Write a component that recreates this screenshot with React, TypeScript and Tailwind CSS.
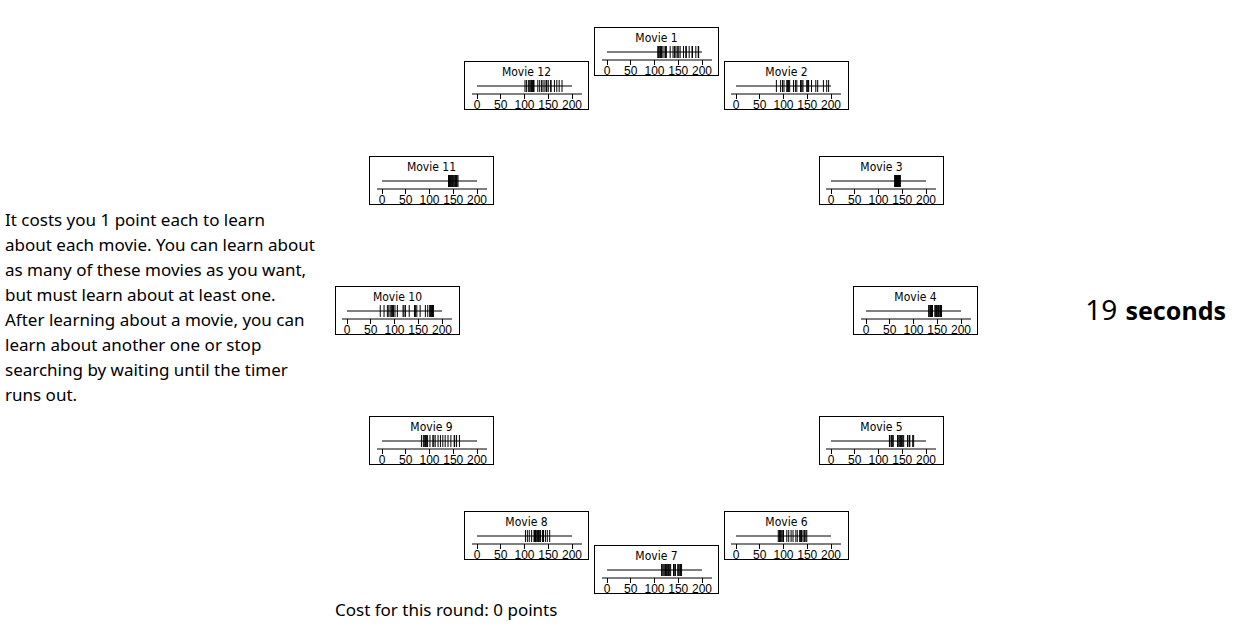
const AXIS_LABELS = [0, 50, 100, 150, 200];
const PLOT_WIDTH = 95;
const RING_RADIUS = 259;

// Distance from the ring's centre for each of the twelve clock positions, starting at the top.
const RING_OFFSETS = [
  [0, -259],
  [130, -225],
  [225, -130],
  [259, 0],
  [225, 130],
  [130, 225],
  [0, 259],
  [-130, 225],
  [-225, 130],
  [-259, 0],
  [-225, -130],
  [-130, -225],
];

type Movie = { id: number; origin: number; scores: number[] };

const movies: Movie[] = [
  { id: 1, origin: 13, scores: [107, 108, 110, 112, 113, 115, 116, 120, 123, 125, 133, 139, 142, 145, 148, 151, 154, 161, 166, 167, 173, 179, 180, 187, 192, 193] },
  { id: 2, origin: 12, scores: [85, 94, 98, 101, 107, 108, 110, 111, 113, 121, 125, 128, 136, 137, 139, 141, 149, 150, 152, 153, 159, 168, 172, 184, 191, 195] },
  { id: 3, origin: 12, scores: [134, 135, 136, 137, 138, 139, 140, 141, 142, 143, 144, 145, 146] },
  { id: 4, origin: 13, scores: [132, 133, 135, 136, 138, 139, 140, 145, 146, 148, 149, 150, 152, 153, 154, 156, 157, 159] },
  { id: 5, origin: 12, scores: [123, 124, 127, 128, 130, 131, 140, 141, 143, 145, 146, 148, 149, 151, 153, 161, 162, 165, 166, 172, 174] },
  { id: 6, origin: 12, scores: [89, 91, 92, 94, 95, 97, 99, 100, 107, 111, 116, 120, 126, 129, 134, 136, 138, 139, 143, 144, 147, 149] },
  { id: 7, origin: 13, scores: [115, 116, 118, 120, 122, 123, 125, 127, 129, 130, 132, 134, 140, 141, 143, 144, 149, 150, 152, 154, 155, 157] },
  { id: 8, origin: 13, scores: [102, 106, 110, 115, 120, 121, 123, 124, 126, 127, 129, 130, 131, 133, 134, 138, 140, 144, 148, 153] },
  { id: 9, origin: 13, scores: [83, 87, 89, 91, 92, 94, 96, 101, 107, 109, 112, 118, 123, 128, 133, 139, 145, 152, 153, 157, 163] },
  { id: 10, origin: 12, scores: [70, 78, 85, 88, 91, 94, 96, 98, 101, 106, 118, 120, 123, 131, 142, 144, 147, 154, 165, 170, 174, 176, 178, 180, 182] },
  { id: 11, origin: 13, scores: [140, 141, 142, 144, 145, 146, 148, 149, 151, 152, 154, 155, 157, 158, 160] },
  { id: 12, origin: 13, scores: [101, 104, 108, 110, 112, 114, 115, 117, 119, 120, 128, 132, 136, 139, 143, 146, 147, 150, 155, 156, 163, 168, 173, 179] },
];

function ScoreStrip({ origin, scores }: { origin: number; scores: number[] }) {
  const toX = (value: number) => origin + (value * PLOT_WIDTH) / 200;
  return (
    <svg viewBox="0 0 123 29" className="block h-[29px] w-full" aria-hidden="true">
      <g transform="translate(-1 -19)">
        <path d={`M${origin} 25H${origin + PLOT_WIDTH}`} stroke="black" />
        <path d={`M${origin - 5} 33H${origin + PLOT_WIDTH + 10}`} stroke="black" />
        {scores.map((score) => (
          <path key={score} d={`M${toX(score)} 19V31`} stroke="black" />
        ))}
        {AXIS_LABELS.map((label) => (
          <g key={label}>
            <path d={`M${Math.floor(toX(label)) + 0.5} 33V38`} stroke="black" />
            <text
              x={toX(label)}
              y="48"
              textAnchor="middle"
              className="fill-black font-['Liberation_Sans',Arial,sans-serif] text-[12px]"
            >
              {label}
            </text>
          </g>
        ))}
      </g>
    </svg>
  );
}

function MovieCard({ movie, index }: { movie: Movie; index: number }) {
  const [x, y] = RING_OFFSETS[index];
  return (
    <button
      type="button"
      className="absolute h-[49px] w-[125px] cursor-pointer overflow-hidden border border-black bg-white"
      style={{ left: RING_RADIUS + x, top: RING_RADIUS + y }}
    >
      <span className="block h-[18px] font-['DejaVu_Sans_Condensed','DejaVu_Sans',sans-serif] text-[12px] leading-[20px]">
        Movie {movie.id}
      </span>
      <ScoreStrip origin={movie.origin} scores={movie.scores} />
    </button>
  );
}

export default function App() {
  return (
    <main className="grid grid-cols-[315px_643px_1fr] items-center gap-x-[15px] bg-white pt-[27px] pl-[5px] font-['Noto_Sans',sans-serif] text-[17px] text-black">
      <p className="pb-2 leading-[25px]">
        It costs you 1 point each to learn
        <br />
        about each movie. You can learn about
        <br />
        as many of these movies as you want,
        <br />
        but must learn about at least one.
        <br />
        After learning about a movie, you can
        <br />
        learn about another one or stop
        <br />
        searching by waiting until the timer
        <br />
        runs out.
      </p>
      <section aria-label="Movies" className="relative h-[567px]">
        {movies.map((movie, index) => (
          <MovieCard key={movie.id} movie={movie} index={index} />
        ))}
      </section>
      <p className="flex items-baseline justify-end gap-2 pr-4 pb-1" role="timer">
        <span className="text-[28px]">19</span>
        <strong className="text-[25px] font-bold">seconds</strong>
      </p>
      <p className="col-start-2 pt-1 leading-6">Cost for this round: 0 points</p>
    </main>
  );
}
